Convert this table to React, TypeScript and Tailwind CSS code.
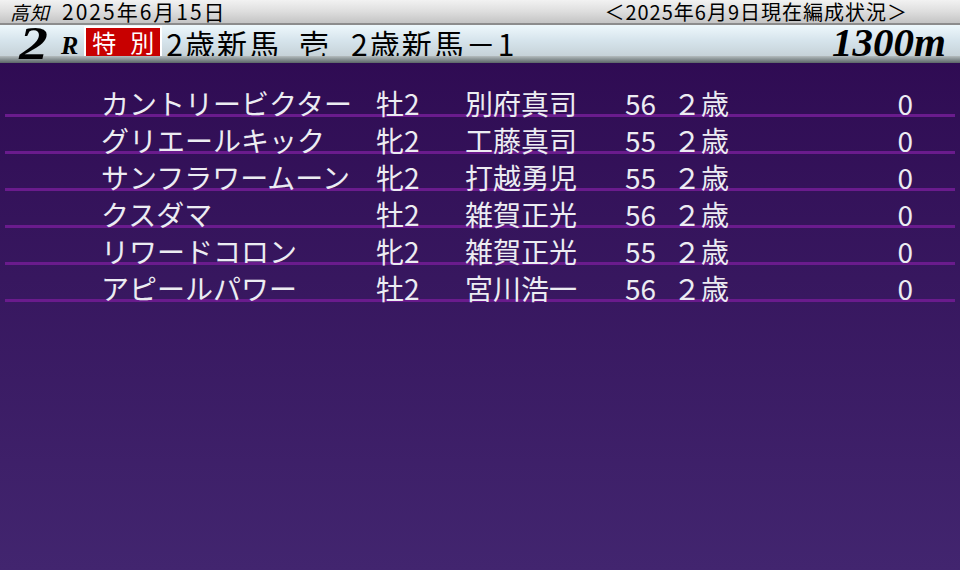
import React from "react";

const rows = [
  { name: "カントリービクター", sex: "牡2", jockey: "別府真司", w: "56", age: "２歳", v: "0" },
  { name: "グリエールキック", sex: "牝2", jockey: "工藤真司", w: "55", age: "２歳", v: "0" },
  { name: "サンフラワームーン", sex: "牝2", jockey: "打越勇児", w: "55", age: "２歳", v: "0" },
  { name: "クスダマ", sex: "牡2", jockey: "雑賀正光", w: "56", age: "２歳", v: "0" },
  { name: "リワードコロン", sex: "牝2", jockey: "雑賀正光", w: "55", age: "２歳", v: "0" },
  { name: "アピールパワー", sex: "牡2", jockey: "宮川浩一", w: "56", age: "２歳", v: "0" },
];

const jp = { fontFamily: '"Noto Sans CJK JP", "Noto Sans", sans-serif' };
const serif = { fontFamily: '"Liberation Serif", "DejaVu Serif", serif' };

export default function App() {
  return (
    <div className="w-[960px] h-[570px] overflow-hidden flex flex-col bg-gradient-to-b from-[#2d0850] to-[#42256f]" style={jp}>
      {/* top bar */}
      <div className="h-[25px] flex items-center bg-gradient-to-b from-[#f2f2f2] via-[#dedede] to-[#c4c4c4] border-b-2 border-[#8c8c8c] text-black">
        <span className="ml-[10px] text-[19px] italic leading-[25px] tracking-[1px]">高知</span>
        <span className="ml-[12px] text-[21px] leading-[25px] tracking-[2px]">2025年6月15日</span>
        <span className="ml-auto mr-[52px] text-[20px] leading-[25px] tracking-[1px]">＜2025年6月9日現在編成状況＞</span>
      </div>
      {/* race bar */}
      <div className="flex flex-col">
        <div className="h-[31px] flex items-center bg-gradient-to-b from-[#eef8fc] via-[#d6e4ec] to-[#c6d2d8] text-black">
          <span className="ml-[22px] text-[46px] font-bold italic leading-none mt-[6px] scale-x-125" style={serif}>2</span>
          <span className="ml-[16px] text-[26px] font-bold italic leading-none mt-[10px]" style={serif}>R</span>
          <div className="ml-[6px] mt-[3px] w-[78px] h-[33px] border-2 border-white bg-[#c80000] flex items-center justify-between px-[6px] text-white text-[24px] leading-none">
            <span>特</span>
            <span>別</span>
          </div>
          <span className="ml-[4px] mt-[4px] text-[30px] leading-none tracking-[2px]">2歳新馬</span>
          <span className="ml-[18px] mt-[4px] text-[30px] leading-none">壱</span>
          <span className="ml-[22px] mt-[4px] text-[30px] leading-none tracking-[2px]">2歳新馬－1</span>
          <span className="ml-auto mr-[14px] mt-[4px] text-[41px] font-bold italic leading-none" style={serif}>1300m</span>
        </div>
        <div className="h-[7px] bg-gradient-to-b from-[#b4bcbe] to-[#5c6668]" />
      </div>
      {/* rows */}
      <div className="pt-[17px] flex flex-col">
        {rows.map((r, i) => (
          <div key={i} className="mx-[5px] h-[37px] border-b-[3px] border-[#6a1b8d] flex items-end text-[28px] leading-none text-[#ececf2]">
            <div className="flex items-end w-full translate-y-[3px]">
              <span className="ml-[96px] w-[275px] whitespace-nowrap">{r.name}</span>
              <span className="w-[89px]">{r.sex}</span>
              <span className="w-[160px]">{r.jockey}</span>
              <span className="w-[48px]">{r.w}</span>
              <span className="">{r.age}</span>
              <span className="ml-auto mr-[42px]">{r.v}</span>
            </div>
          </div>
        ))}
      </div>
    </div>
  );
}
